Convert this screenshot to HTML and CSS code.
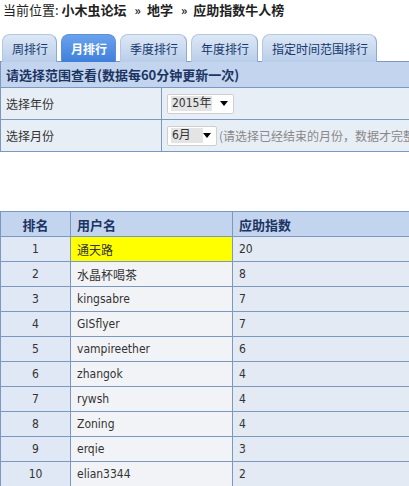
FILE: index.html
```html
<!DOCTYPE html>
<html>
<head>
<meta charset="utf-8">
<link rel="stylesheet" href="styles.css">
</head>
<body>
<div class="page">
  <div class="crumb">当前位置: <b>小木虫论坛</b><b class="sep">»</b><b>地学</b><b class="sep">»</b><b>应助指数牛人榜</b></div>
  <div class="tabs">
    <div class="tab">周排行</div>
    <div class="tab active">月排行</div>
    <div class="tab">季度排行</div>
    <div class="tab">年度排行</div>
    <div class="tab">指定时间范围排行</div>
  </div>
  <table class="filter">
    <tr><th colspan="2">请选择范围查看(数据每60分钟更新一次)</th></tr>
    <tr>
      <td class="lbl">选择年份</td>
      <td><span class="sel sel-year"><span class="val">2015年</span><svg class="arr" width="8" height="5" viewBox="0 0 8 5"><path d="M0 0H8L4 5Z" fill="#000"/></svg></span></td>
    </tr>
    <tr>
      <td class="lbl">选择月份</td>
      <td><span class="sel sel-month"><span class="val">6月</span><svg class="arr" width="8" height="5" viewBox="0 0 8 5"><path d="M0 0H8L4 5Z" fill="#000"/></svg></span><span class="hint">(请选择已经结束的月份，数据才完整)</span></td>
    </tr>
  </table>
  <table class="rank">
    <tr><th class="c1">排名</th><th class="c2">用户名</th><th class="c3">应助指数</th></tr>
    <tr><td class="c1">1</td><td class="c2 hl">通天路</td><td class="c3">20</td></tr>
    <tr><td class="c1">2</td><td class="c2">水晶杯喝茶</td><td class="c3">8</td></tr>
    <tr><td class="c1">3</td><td class="c2">kingsabre</td><td class="c3">7</td></tr>
    <tr><td class="c1">4</td><td class="c2">GISflyer</td><td class="c3">7</td></tr>
    <tr><td class="c1">5</td><td class="c2">vampireether</td><td class="c3">6</td></tr>
    <tr><td class="c1">6</td><td class="c2">zhangok</td><td class="c3">4</td></tr>
    <tr><td class="c1">7</td><td class="c2">rywsh</td><td class="c3">4</td></tr>
    <tr><td class="c1">8</td><td class="c2">Zoning</td><td class="c3">4</td></tr>
    <tr><td class="c1">9</td><td class="c2">erqie</td><td class="c3">3</td></tr>
    <tr><td class="c1">10</td><td class="c2">elian3344</td><td class="c3">2</td></tr>
  </table>
</div>
</body>
</html>
```
FILE: styles.css
```css
html, body {
  margin: 0;
  padding: 0;
  background: #fff;
  overflow: hidden;
}
.page {
  width: 409px;
  height: 486px;
  overflow: hidden;
  font-family: "DejaVu Sans Condensed", "Liberation Sans", "Noto Sans CJK SC", sans-serif;
  font-size: 12px;
  color: #333;
}
.crumb {
  font-family: "Noto Sans CJK SC", sans-serif;
  font-size: 13px;
  line-height: 18px;
  padding: 1px 0 0 3px;
  height: 34px;
  box-sizing: border-box;
  color: #222;
  white-space: nowrap;
}
.crumb b { font-weight: bold; color: #222; }
.crumb .sep {
  font-size: 12px;
  padding: 0 6px 0 8px;
}
.tabs {
  display: flex;
  gap: 4px;
  padding-left: 2px;
  height: 28px;
  align-items: flex-end;
}
.tab {
  font-family: "Noto Sans CJK SC", sans-serif;
  font-size: 12px;
  height: 27px;
  line-height: 27px;
  padding: 0 8px 0 9px;
  border-radius: 8px 8px 0 0;
  background: linear-gradient(#dde8f6, #b9cde9);
  border: 1px solid #b3c7e3;
  border-bottom: none;
  border-right-color: #8fa9cf;
  color: #15386d;
  white-space: nowrap;
}
.tab.active {
  background: linear-gradient(#6aa2ec, #3f7fdc);
  border-color: #5b8fd9;
  color: #fff;
  font-weight: bold;
}
table {
  border-collapse: collapse;
  font-family: "Noto Sans CJK SC", sans-serif;
}
.filter {
  width: 520px;
  margin-top: -1px;
}
.filter th, .filter td {
  border: 1px solid #7b98c0;
  text-align: left;
  white-space: nowrap;
}
.filter th {
  background: #c3d5ee;
  height: 25px;
  padding: 0 0 0 5px;
  font-size: 13px;
  font-weight: bold;
  color: #1c3463;
}
.filter td {
  background: #e8eef6;
  height: 31px;
  padding: 0 0 0 5px;
  font-size: 12px;
  color: #333;
}
.filter td.lbl {
  width: 155px;
}
.sel {
  display: inline-flex;
  align-items: center;
  vertical-align: middle;
  background: #fff;
  border: 1px solid #d0cfcf;
  border-radius: 2px;
  height: 20px;
  box-sizing: border-box;
  padding: 0 0 0 3px;
  font-family: "DejaVu Sans Condensed", "Liberation Sans", "Noto Sans CJK SC", sans-serif;
  font-size: 12px;
  color: #333;
}
.sel-year { width: 67px; }
.sel-month { width: 50px; }
.sel .val {
  background: #e4e4e4;
  padding: 0 1px;
  line-height: 15px;
}
.sel-month .val { padding-right: 12px; }
.sel .arr { margin-left: auto; margin-right: 5px; }
.hint {
  color: #888;
  font-size: 12px;
  vertical-align: middle;
  margin-left: 2px;
}
.rank {
  margin-top: 59px;
  width: 440px;
  table-layout: fixed;
}
.rank th, .rank td {
  border: 1px solid #7b98c0;
  height: 25px;
  box-sizing: border-box;
  font-size: 12px;
  white-space: nowrap;
}
.rank th {
  background: #c3d5ee;
  color: #1c3463;
  font-weight: bold;
  font-size: 13px;
}
.rank .c1 { width: 70px; text-align: center; }
.rank .c2 { width: 162px; text-align: left; padding-left: 6px; }
.rank .c3 { text-align: left; padding-left: 6px; }
.rank td.c1 { background: #dfe8f4; color: #333; }
.rank td.c2 { background: #f2f3f7; color: #333; }
.rank td.c3 { background: #e3eaf4; color: #333; }
.rank td.hl { background: #ffff00; }
.rank td { font-family: "DejaVu Sans Condensed", "Liberation Sans", "Noto Sans CJK SC", sans-serif; }
```
